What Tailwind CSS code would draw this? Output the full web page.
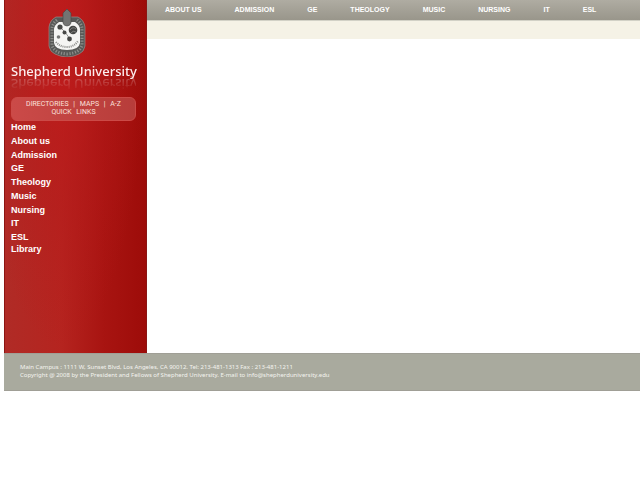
<!DOCTYPE html>
<html lang="en">
<head>
<meta charset="utf-8">
<meta name="viewport" content="width=device-width, initial-scale=1">
<title>Shepherd University</title>
<script src="https://cdn.jsdelivr.net/npm/@tailwindcss/browser@4"></script>
</head>
<body class="bg-white pl-1 font-['Liberation_Sans',Arial,sans-serif] text-white">
<div class="flex">
  <aside class="w-[143px] shrink-0 border-x border-[#8c1513] bg-[radial-gradient(ellipse_at_40%_12%,#c0181acc_0%,#b8181a66_35%,transparent_70%),linear-gradient(90deg,#b02b26_0%,#b5241f_40%,#a81411_70%,#9d0c09_100%)] pr-2.5 pb-[98px] pl-1.5">
    <a href="#" class="block pt-[9px]" aria-label="Shepherd University home">
      <svg class="ml-[37px] h-12 w-[38px]" viewBox="0 0 38 48" aria-hidden="true">
        <path d="M8 8H30Q36 11 37 18V37Q36 43 31 45Q25 48 19 48Q13 48 7 45Q2 43 1 37V18Q2 11 8 8Z" fill="#575856" stroke="#9c9c99" stroke-width=".6"/>
        <path d="M9 11Q4 15 4 20V36Q6 44 19 45Q32 44 34 36V20Q34 15 29 11" fill="none" stroke="#8d8e8b" stroke-width="3" stroke-dasharray="1.2 1.6"/>
        <path d="M11 13H27Q32 16 32 21V34Q31 41 19 41Q7 41 6 34V21Q6 16 11 13Z" fill="#f5f5f3"/>
        <path d="M15 4L19 0L23 4V14Q22 17 19 17Q16 17 15 14Z" fill="#737472" stroke="#454644" stroke-width=".6"/>
        <path d="M12 18L17 23L22 30" fill="none" stroke="#777876" stroke-width=".8"/>
        <g fill="#464745"><circle cx="12" cy="18" r="2.6"/><circle cx="16.500" cy="23.500" r="2"/><circle cx="21.500" cy="30" r="2.400"/><circle cx="25" cy="21" r="4.300"/><circle cx="10.500" cy="28" r="1.800" fill="#777876"/></g>
        <path d="M22 21Q25 17 28 20M23 24Q25 21 28 23" fill="none" stroke="#969794" stroke-width=".7"/>
        <path d="M8 33Q12 38 19 38Q26 38 30 32" fill="none" stroke="#8a8b88" stroke-width="2" stroke-dasharray="1 1"/>
      </svg>
      <span class="mt-1 block whitespace-nowrap font-['Noto_Sans',sans-serif] text-[13px] leading-[20px] font-medium text-[#fdeeee] [-webkit-box-reflect:below_-7px_linear-gradient(transparent_15%,rgba(255,255,255,0.35))]">Shepherd University</span>
    </a>
    <div class="mt-4 rounded-md border border-[#cb4a47] bg-linear-to-r from-[#cb4a48] to-[#b73d3a] pt-[2px] pb-[4px] text-center font-[Roboto,sans-serif] text-[7px] leading-[8px] text-[#fbe0dc] [word-spacing:3px]">
      <a href="#">DIRECTORIES</a> | <a href="#">MAPS</a> | <a href="#">A-Z</a><br><a href="#">QUICK LINKS</a>
    </div>
    <nav aria-label="Main">
      <ul class="grid h-[134px] grid-rows-[repeat(8,1fr)_12px_12px] text-[9px] leading-[12px] font-bold">
        <li><a href="#">Home</a></li>
        <li><a href="#">About us</a></li>
        <li><a href="#">Admission</a></li>
        <li><a href="#">GE</a></li>
        <li><a href="#">Theology</a></li>
        <li><a href="#">Music</a></li>
        <li><a href="#">Nursing</a></li>
        <li><a href="#">IT</a></li>
        <li><a href="#">ESL</a></li>
        <li><a href="#">Library</a></li>
      </ul>
    </nav>
  </aside>
  <main class="min-w-0 flex-1">
    <nav aria-label="Departments" class="flex h-[21px] gap-[33px] overflow-hidden border-b border-[#d2d1c6] bg-linear-to-b from-[#afaca2] to-[#99968b] pl-[18px] text-[7px] leading-[20px] font-bold whitespace-nowrap">
      <a href="#">ABOUT US</a><a href="#">ADMISSION</a><a href="#">GE</a><a href="#">THEOLOGY</a><a href="#">MUSIC</a><a href="#">NURSING</a><a href="#">IT</a><a href="#">ESL</a>
    </nav>
    <div class="h-[18px] bg-[#f5f2e6]"></div>
  </main>
</div>
<footer class="border-y border-y-[#a09f96] bg-[#a9aa9e] px-4 pt-[9px] pb-[11px] font-['Noto_Sans',sans-serif] text-[6px] leading-[8px] text-[#f4f4ef]">
  <p>Main Campus : 1111 W, Sunset Blvd, Los Angeles, CA 90012. Tel: 213-481-1313 Fax : 213-481-1211</p>
  <p>Copyright @ 2008 by the President and Fellows of Shepherd University. E-mail to <a href="mailto:info@shepherduniversity.edu">info@shepherduniversity.edu</a></p>
</footer>
</body>
</html>
